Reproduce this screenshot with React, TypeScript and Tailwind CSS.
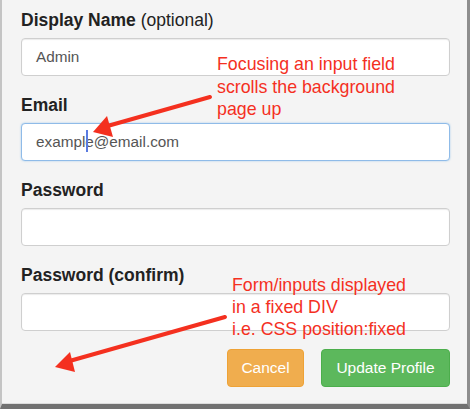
import React from 'react'

const font = { fontFamily: '"Liberation Sans", Arial, Helvetica, sans-serif' }

function Field({ label, hint, value, focused }: { label: string; hint?: string; value?: string; focused?: boolean }) {
  return (
    <div className="flex flex-col">
      <label className="h-6 leading-6 text-[17.5px] font-bold text-[#222]">
        {label}
        {hint && <span className="font-normal"> {hint}</span>}
      </label>
      <div
        className={
          'mt-[6px] h-[38px] rounded-[4px] bg-white flex items-center pl-[14px] text-[15.3px] text-[#555] border ' +
          (focused
            ? 'border-[#8fbbe8] shadow-[0_0_2px_rgba(102,175,233,0.6)]'
            : 'border-[#cfcfcf] shadow-[inset_0_1px_1px_rgba(0,0,0,0.08)]')
        }
      >
        {value && focused ? (
          <span className="relative">
            examp
            <span className="absolute left-[50px] top-[-1px] h-[22px] w-[2px] bg-[#5a7be0]" />
            le@email.com
          </span>
        ) : (
          value
        )}
      </div>
    </div>
  )
}

export default function App() {
  return (
    <div className="w-[470px] h-[409px] overflow-hidden" style={font}>
      <div className="relative h-[409px] bg-[#f4f4f4] border-l-2 border-l-[#c4c4c4] border-r-[3px] border-r-[#8d8d8d] border-b-[5px] border-b-[#717171]">
        <div className="flex flex-col gap-[17px] pl-[19px] pr-[17px] pt-2">
          <Field label="Display Name" hint="(optional)" value="Admin" />
          <Field label="Email" value="example@email.com" focused />
          <Field label="Password" />
          <Field label="Password (confirm)" />
          <div className="flex justify-end gap-[17px] pt-px">
            <button className="h-[38px] w-[77px] rounded-[4px] bg-[#f0ad4e] border border-[#eea236] text-white text-[15.5px]">
              Cancel
            </button>
            <button className="h-[38px] w-[129px] rounded-[4px] bg-[#5cb85c] border border-[#4cae4c] text-white text-[15.5px]">
              Update Profile
            </button>
          </div>
        </div>
        <div className="absolute bottom-0 left-0 right-0 h-px bg-[#dcdcdc]" />

        {/* annotations */}
        <div className="absolute left-[215px] top-[53px] text-[17.8px] leading-[22.5px] text-[#f4301f]">
          Focusing an input field
          <br />
          scrolls the background
          <br />
          page up
        </div>
        <div className="absolute left-[230px] top-[274px] text-[17.8px] leading-[22px] text-[#f4301f]">
          Form/inputs displayed
          <br />
          in a fixed DIV
          <br />
          i.e. CSS position:fixed
        </div>
        <svg className="absolute left-[-2px] top-0 pointer-events-none" width="470" height="409">
          <line x1="210" y1="97" x2="104" y2="127" stroke="#f4301f" strokeWidth="4" strokeLinecap="round" />
          <polygon points="93,132 107,116 113,137" fill="#f4301f" />
          <line x1="225" y1="317" x2="66" y2="362" stroke="#f4301f" strokeWidth="4" strokeLinecap="round" />
          <polygon points="55,367 70,352 75,372" fill="#f4301f" />
        </svg>
      </div>
    </div>
  )
}
